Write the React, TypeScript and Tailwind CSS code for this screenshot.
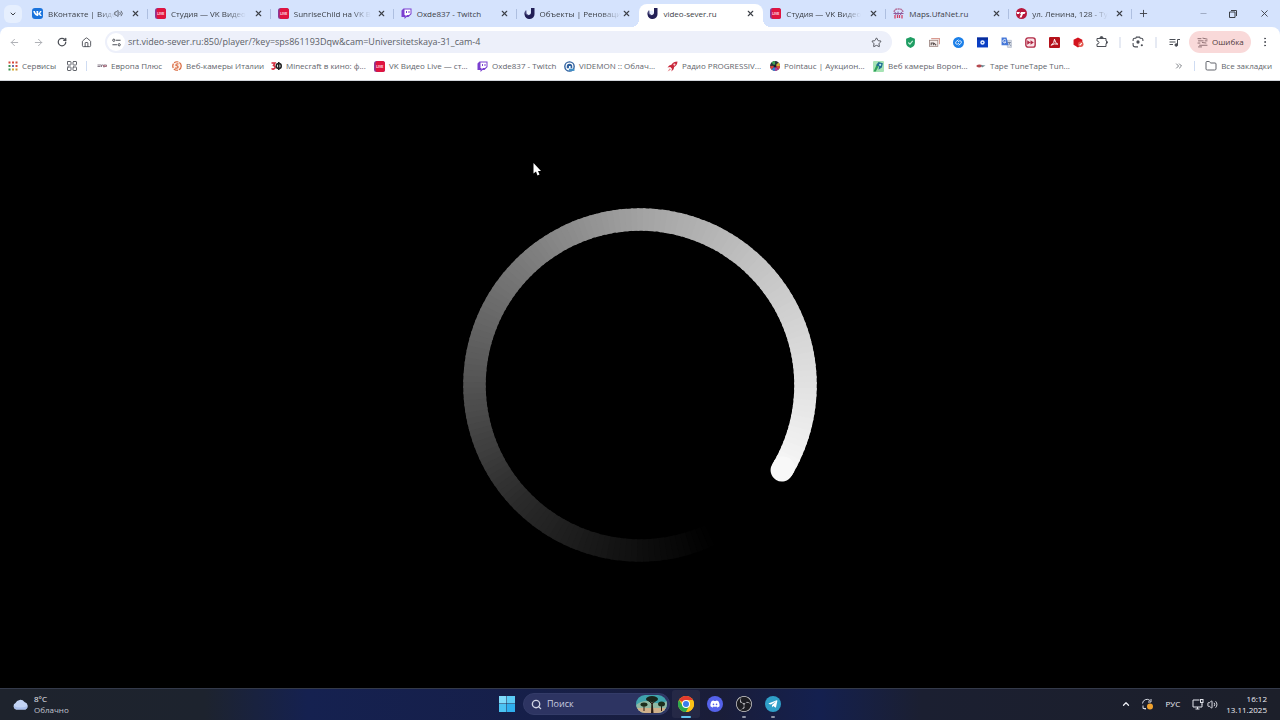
import React from 'react';
import {
  ArrowLeft,
  ArrowRight,
  ChevronDown,
  ChevronUp,
  ChevronsRight,
  Copy,
  EllipsisVertical,
  Folder,
  House,
  LayoutGrid,
  Minus,
  Plus,
  RotateCw,
  Search,
  Star,
  Volume2,
  X,
} from 'lucide-react';
import { FaDiscord, FaTelegramPlane, FaVk } from 'react-icons/fa';
import { SiObsstudio } from 'react-icons/si';

/* ---------- Favicons ---------- */

function VkIcon() {
  return (
    <span className="flex size-[11px] items-center justify-center rounded-[3px] bg-[#1a73dc] text-white">
      <FaVk size={9} />
    </span>
  );
}

function LiveIcon() {
  return (
    <svg viewBox="0 0 22 22" className="size-[11px]">
      <rect width="22" height="22" rx="5" fill="#8a3a96" />
      <rect x="3" width="19" height="22" rx="5" fill="#e0143f" />
      <text x="11.5" y="14" fontSize="7" fontWeight="700" fill="#ffdfe6" textAnchor="middle" fontFamily="Roboto, sans-serif">
        LIVE
      </text>
    </svg>
  );
}

function TwitchIcon() {
  return (
    <svg viewBox="0 0 22 22" className="size-[11px]">
      <path d="M5 1 H21 V12 L15 18 H11 L7 22 V18 H1 V5 Z" fill="#7a3fd0" />
      <path d="M7 3 H19 V11 L16 14 H12 L9 17 V14 H7 Z" fill="#fff" />
      <path d="M11 6 V10 M16 6 V10" stroke="#7a3fd0" strokeWidth="2" />
    </svg>
  );
}

function SeverIcon() {
  return (
    <svg viewBox="0 0 22 22" className="size-[11px]">
      <path d="M14 0 H21 V11 A10 10 0 0 1 1 13 Q0 8 4 5 Q3 12 9 14 Q14 14 14 8 Z" fill="#221f56" />
      <circle cx="9" cy="9" r="4" fill="#e4edfd" />
      <path d="M4 5 Q2 12 8 15" stroke="#6d6f9c" strokeWidth="2" fill="none" />
    </svg>
  );
}

function MapsIcon() {
  return (
    <svg viewBox="0 0 22 22" className="size-[11px]">
      <path d="M2 8 Q4 1 11 2 Q18 1 20 8" fill="none" stroke="#b5719b" strokeWidth="3" strokeDasharray="4 1" />
      <path d="M1 11 H21 M4 8 L6 14 M10 7 V14 M17 8 L15 14" stroke="#8d5a9c" strokeWidth="2" />
      <path d="M4 14 V21 M9 14 V20 M13 14 V20 M18 14 V21" stroke="#d33c62" strokeWidth="2.5" />
    </svg>
  );
}

function TvisIcon() {
  return (
    <svg viewBox="0 0 22 22" className="size-[11px]">
      <circle cx="11" cy="11" r="11" fill="#b8183c" />
      <path d="M1 8 H19 L17 12 H14 L11 19 H7 L10 12 H2 Z" fill="#fff" />
      <path d="M9 8 L6 14" stroke="#b8183c" strokeWidth="2" />
    </svg>
  );
}

function AppsIcon() {
  const colors = ['#d9483b', '#d9483b', '#c9513f', '#3c8f4e', '#6b6fa8', '#d9483b', '#3c8f4e', '#d6a92c', '#c9973a'];
  return (
    <svg viewBox="0 0 20 20" className="size-[10px]">
      {colors.map((c, i) => (
        <rect key={i} x={1 + (i % 3) * 7} y={1 + Math.floor(i / 3) * 7} width="4" height="4" fill={c} />
      ))}
    </svg>
  );
}

function EuropaIcon() {
  return (
    <svg viewBox="0 0 20 20" className="size-[10px]">
      <path d="M1 8 H8 M1 11 H7 M9 12 V8 H13 V12 M14 13 V8 H19 V11 H14" stroke="#8a7f8c" strokeWidth="2" fill="none" />
      <path d="M12 10 H19" stroke="#d8677a" strokeWidth="1.5" />
    </svg>
  );
}

function ItalyIcon() {
  return (
    <svg viewBox="0 0 20 20" className="size-[10px]">
      <circle cx="10" cy="10" r="8.5" fill="#fdf1ea" stroke="#d9673c" strokeWidth="2.4" strokeDasharray="9 2" />
      <path d="M13 6 Q7 5 8 9 Q13 10 12 13 Q10 15 6 14" fill="none" stroke="#d9673c" strokeWidth="2.2" />
    </svg>
  );
}

function KinoIcon() {
  return (
    <svg viewBox="0 0 22 20" className="h-[10px] w-[11px]">
      <path d="M1 4 H8 L5 9 Q9 10 8 14 Q5 18 1 15" fill="none" stroke="#d42a3c" strokeWidth="3" />
      <circle cx="15.5" cy="10" r="5" fill="none" stroke="#222" strokeWidth="3" />
      <path d="M15.5 2 V18" stroke="#222" strokeWidth="3" />
    </svg>
  );
}

function VidemonIcon() {
  return (
    <svg viewBox="0 0 20 20" className="size-[11px]">
      <circle cx="10" cy="10" r="8.5" fill="#fff" stroke="#2d5f9e" strokeWidth="2.5" />
      <path d="M5 10 A5 5 0 0 1 15 10 V13 H12 V9 H9 V13 H5 Z" fill="#2d5f9e" />
      <path d="M9 14 H19 V18 H9 Z" fill="#3f8fc8" />
    </svg>
  );
}

function RocketIcon() {
  return (
    <svg viewBox="0 0 20 20" className="size-[11px]">
      <path d="M19 1 Q12 1 8 7 L4 8 L1 12 L6 11 L9 14 L8 19 L12 15 L13 11 Q19 8 19 1 Z" fill="#c9283b" />
      <circle cx="13.5" cy="6.5" r="2" fill="#f6cdd0" />
      <path d="M5 13 L1 19 L7 16" fill="#e58a8f" />
    </svg>
  );
}

function PointaucIcon() {
  return (
    <svg viewBox="0 0 20 20" className="size-[10px]">
      <circle cx="10" cy="10" r="10" fill="#2c3a3b" />
      <path d="M10 10 L3 3 A10 10 0 0 1 10 0 Z" fill="#3fa657" />
      <path d="M10 10 L17 3 A10 10 0 0 1 20 10 Z" fill="#d3b138" />
      <path d="M10 10 L17 17 A10 10 0 0 1 10 20 Z" fill="#b33fa0" />
      <path d="M10 10 L0 10 A10 10 0 0 0 3 17 Z" fill="#d8443d" />
      <path d="M10 10 L20 10 A10 10 0 0 1 17 17 Z" fill="#d8443d" />
      <path d="M10 10 L3 17 A10 10 0 0 0 10 20 Z" fill="#3d7ed8" />
      <circle cx="10" cy="10" r="3" fill="#1d2326" />
    </svg>
  );
}

function VoronezhIcon() {
  return (
    <svg viewBox="0 0 20 20" className="size-[11px]">
      <rect width="20" height="20" rx="2" fill="#a6e3b4" />
      <path d="M5 8 L10 2 L18 4 L16 12 L10 16 L11 10 Z" fill="#1f6f92" />
      <path d="M6 8 L10 10 L5 19 H1 Z" fill="#2ea05a" />
      <circle cx="13" cy="7" r="2" fill="#bff0e8" />
    </svg>
  );
}

function TapeIcon() {
  return (
    <svg viewBox="0 0 20 20" className="size-[10px]">
      <path d="M1 9 Q5 6 12 8 L11 12 Q5 14 1 11 Z" fill="#b4484f" />
      <path d="M10 8 L19 9 L12 13 Z" fill="#6a8a94" />
    </svg>
  );
}

/* ---------- Extension icons ---------- */

function ShieldIcon() {
  return (
    <svg viewBox="0 0 20 20" className="size-[11px]">
      <path d="M10 0 L18 3 V11 Q18 17 10 20 Q2 17 2 11 V3 Z" fill="#1f9d63" />
      <path d="M6 10 L9 13 L14 7" fill="none" stroke="#c9f2dc" strokeWidth="2" />
    </svg>
  );
}

function CastIcon() {
  return (
    <svg viewBox="0 0 20 20" className="size-[11px]">
      <path d="M4 3 H19 V13" fill="none" stroke="#d89a90" strokeWidth="2" />
      <rect x="1" y="6" width="15" height="11" fill="#f6eeec" stroke="#9b8580" strokeWidth="1.5" />
      <path d="M4 15 V11 H8 V15 M9 11 L13 15" stroke="#5b5150" strokeWidth="2" fill="none" />
    </svg>
  );
}

function ShazamIcon() {
  return (
    <svg viewBox="0 0 20 20" className="size-[11px]">
      <circle cx="10" cy="10" r="10" fill="#1b7fe8" />
      <path d="M10 5 L6 8 Q3 11 6 13 Q8 14 11 11 M10 15 L14 12 Q17 9 14 7 Q12 6 9 9" fill="none" stroke="#dcecff" strokeWidth="1.8" />
    </svg>
  );
}

function CameraIcon() {
  return (
    <svg viewBox="0 0 20 20" className="size-[11px]">
      <rect y="1" width="20" height="18" fill="#0a3fc4" />
      <rect y="1" width="20" height="4" fill="#082c9a" />
      <circle cx="10" cy="10" r="4" fill="#e8f0ff" />
      <circle cx="10" cy="10" r="1.5" fill="#0a45c4" />
    </svg>
  );
}

function TranslateIcon() {
  return (
    <svg viewBox="0 0 20 20" className="size-[11px]">
      <path d="M9 6 H19 V19 H12 Z" fill="#d5dbe6" stroke="#a6afc0" />
      <path d="M1 1 H10 L14 15 H1 Z" fill="#4678d8" />
      <path d="M9 6 A3 3 0 1 0 9 9 H6" fill="none" stroke="#fff" strokeWidth="1.5" />
      <path d="M12 10 H18 M15 9 V10 Q15 14 18 16" fill="none" stroke="#6d7890" strokeWidth="1.5" />
    </svg>
  );
}

function SkipIcon() {
  return (
    <svg viewBox="0 0 20 20" className="size-[11px]">
      <rect x="1.5" y="1.5" width="17" height="17" rx="4" fill="#fbe3e8" stroke="#b02a45" strokeWidth="2.5" />
      <path d="M4 6 L10 10 L4 14 Z M10 6 L16 10 L10 14 Z" fill="#b02a45" />
    </svg>
  );
}

function AcrobatIcon() {
  return (
    <svg viewBox="0 0 20 20" className="size-[11px]">
      <rect width="20" height="20" rx="2" fill="#b5121b" />
      <path d="M4 15 Q10 11 10 4 Q11 11 16 13 Q9 11 4 15 Z" fill="none" stroke="#fff" strokeWidth="1.8" />
    </svg>
  );
}

function CubeIcon() {
  return (
    <svg viewBox="0 0 20 20" className="size-[11px]">
      <path d="M9 1 L17 5 V14 L9 19 L1 14 V5 Z" fill="#d3131d" />
      <circle cx="14" cy="13" r="5" fill="#e3574e" />
      <path d="M12 15 L16 11" stroke="#fff" strokeWidth="2" />
    </svg>
  );
}

function PuzzleIcon() {
  return (
    <svg viewBox="0 0 24 24" className="size-3" fill="none" stroke="#4b4e55" strokeWidth="2">
      <path d="M2 5 H20 V10 M20 15 V21 H2 V16 M2 5 V10" />
      <path d="M2 10 Q6 10 6 13 Q6 16 2 16" />
      <path d="M8 4 Q8 1 11 1 Q14 1 14 4 M20 10 Q23 10 23 13 Q23 15 20 15" fill="#4b4e55" />
    </svg>
  );
}

function LensIcon() {
  return (
    <svg viewBox="0 0 22 22" className="size-3" fill="none" stroke="#4b4e55" strokeWidth="2">
      <path d="M2 9 V7 Q2 4 5 4 H7 L8 2 H14 L15 4 H17 Q20 4 20 7 V9" />
      <path d="M2 13 V16 Q2 20 6 20 H11" />
      <circle cx="11" cy="11" r="3" fill="#4b4e55" stroke="none" />
      <circle cx="18" cy="17" r="2" fill="#4b4e55" stroke="none" />
    </svg>
  );
}

function MediaIcon() {
  return (
    <svg viewBox="0 0 22 22" className="size-[11px]" fill="none" stroke="#4b4e55" strokeWidth="2">
      <path d="M1 5 H13 M1 10 H13 M1 15 H8 M22 5 H17 V16" />
      <circle cx="14.5" cy="16" r="2.5" fill="#4b4e55" />
    </svg>
  );
}

function SiteInfoIcon() {
  return (
    <svg viewBox="0 0 20 20" className="size-[9px]" fill="none" stroke="#4b4e55" strokeWidth="2.2">
      <circle cx="4" cy="5" r="2.5" />
      <path d="M9 5 H19 M1 15 H11" />
      <circle cx="16" cy="15" r="2.5" />
    </svg>
  );
}

function ProfileIcon() {
  return (
    <svg viewBox="0 0 20 20" className="size-[11px]" fill="none" stroke="#7a5a5e" strokeWidth="1.5">
      <path d="M1 3 H8 M10 2 L19 4 M2 7 H12 M14 7 H19 M1 11 H6 M9 10 L17 11 M4 15 H19 M2 18 H9" />
    </svg>
  );
}

/* ---------- Data ---------- */

const tabs = [
  { title: 'ВКонтакте | Виде', icon: <VkIcon />, audio: true, fade: true },
  { title: 'Студия — VK Видео', icon: <LiveIcon />, fade: true },
  { title: 'SunriseChild на VK В', icon: <LiveIcon />, fade: true },
  { title: 'Oxde837 - Twitch', icon: <TwitchIcon /> },
  { title: 'Объекты | Реноваци', icon: <SeverIcon />, fade: true },
  { title: 'video-sever.ru', icon: <SeverIcon />, active: true },
  { title: 'Студия — VK Видео', icon: <LiveIcon />, fade: true },
  { title: 'Maps.UfaNet.ru', icon: <MapsIcon /> },
  { title: 'ул. Ленина, 128 - Ту', icon: <TvisIcon />, fade: true },
];

const bookmarks = [
  { title: 'Европа Плюс', icon: <EuropaIcon />, width: 'w-[75px]' },
  { title: 'Веб-камеры Италии', icon: <ItalyIcon />, width: 'w-[99px]' },
  { title: 'Minecraft в кино: ф...', icon: <KinoIcon />, width: 'w-[103px]' },
  { title: 'VK Видео Live — ст...', icon: <LiveIcon />, width: 'w-[103px]' },
  { title: 'Oxde837 - Twitch', icon: <TwitchIcon />, width: 'w-[87px]' },
  { title: 'VIDEMON :: Облач...', icon: <VidemonIcon />, width: 'w-[103px]' },
  { title: 'Радио PROGRESSIV...', icon: <RocketIcon />, width: 'w-[103px]' },
  { title: 'Pointauc | Аукцион...', icon: <PointaucIcon />, width: 'w-[103px]' },
  { title: 'Веб камеры Ворон...', icon: <VoronezhIcon />, width: 'w-[103px]' },
  { title: 'Tape TuneTape Tun...', icon: <TapeIcon />, width: 'w-[103px]' },
];

const extensions = [
  { name: 'AdGuard', icon: <ShieldIcon /> },
  { name: 'Cast', icon: <CastIcon /> },
  { name: 'Shazam', icon: <ShazamIcon /> },
  { name: 'Camera', icon: <CameraIcon /> },
  { name: 'Translate', icon: <TranslateIcon /> },
  { name: 'Skip', icon: <SkipIcon /> },
  { name: 'Acrobat', icon: <AcrobatIcon /> },
  { name: 'Cube', icon: <CubeIcon /> },
  { name: 'Extensions', icon: <PuzzleIcon /> },
];

/* ---------- Browser chrome ---------- */

function TabStrip() {
  return (
    <div className="flex h-[27px] items-center bg-[#d5e3fd] text-[#3c4047]">
      <div className="flex w-[25px] shrink-0 pl-1">
        <button aria-label="Поиск вкладок" className="flex size-[18px] items-center justify-center rounded-md bg-[#e6effe]">
          <ChevronDown size={8} strokeWidth={3} />
        </button>
      </div>
      {tabs.map((tab, i) => (
        <div
          key={i}
          className={
            tab.active
              ? 'relative flex h-[23px] min-w-0 flex-1 items-center self-end rounded-t-lg bg-white pr-2 pb-1 pl-2'
              : 'relative flex h-[27px] min-w-0 flex-1 items-center pr-2 pl-[7px]'
          }
        >
          {tab.active && (
            <>
              <span className="absolute bottom-0 -left-2 size-2 bg-[radial-gradient(circle_at_0_0,transparent_8px,white_8px)]" />
              <span className="absolute -right-2 bottom-0 size-2 bg-[radial-gradient(circle_at_100%_0,transparent_8px,white_8px)]" />
            </>
          )}
          <button className="flex min-w-0 flex-1 items-center gap-[5px] text-left">
            <span className="shrink-0">{tab.icon}</span>
            <span className={tab.fade ? 'whitespace-nowrap mask-r-from-75% mask-r-to-100%' : 'whitespace-nowrap'}>
              {tab.title}
            </span>
          </button>
          {tab.audio && <Volume2 size={9} strokeWidth={2} className="mr-2 shrink-0" />}
          <button aria-label="Закрыть вкладку" className="shrink-0">
            <X size={9} strokeWidth={3} />
          </button>
          {!tab.active && !tabs[i + 1]?.active && <span className="absolute right-0 h-[10px] w-px bg-[#aebfe0]" />}
        </div>
      ))}
      <div className="flex w-[148px] shrink-0 items-center pl-[6px]">
        <button aria-label="Новая вкладка">
          <Plus size={11} />
        </button>
        <div className="ml-auto flex items-center">
          <button aria-label="Свернуть" className="flex w-[30px] justify-center text-[#8d99b0]">
            <Minus size={9} />
          </button>
          <button aria-label="Развернуть" className="flex w-[30px] justify-center">
            <svg viewBox="0 0 16 16" className="size-2" fill="none" stroke="currentColor" strokeWidth="2">
              <path d="M1 4 H12 V15 H1 Z M4 1 H15 V12" />
            </svg>
          </button>
          <button aria-label="Закрыть" className="flex w-8 justify-center">
            <X size={11} />
          </button>
        </div>
      </div>
    </div>
  );
}

function Divider() {
  return <span className="mx-[5px] h-[11px] w-[2px] shrink-0 bg-[#e6eaf3]" />;
}

function Toolbar() {
  return (
    <div className="flex h-[30px] items-center text-[#4b4e55]">
      <div className="flex pl-[2px]">
        <button aria-label="Назад" className="flex w-6 justify-center text-[#a9abb0]">
          <ArrowLeft size={11} />
        </button>
        <button aria-label="Вперёд" className="flex w-6 justify-center text-[#a9abb0]">
          <ArrowRight size={11} />
        </button>
        <button aria-label="Обновить" className="flex w-6 justify-center">
          <RotateCw size={10} strokeWidth={3} />
        </button>
        <button aria-label="Главная" className="flex w-6 justify-center">
          <House size={11} />
        </button>
      </div>
      <div className="ml-[7px] flex h-[22px] min-w-0 flex-1 items-center rounded-full bg-[#edf0fa] pr-[10px] pl-[2px]">
        <button aria-label="Сведения о сайте" className="flex size-[18px] shrink-0 items-center justify-center rounded-full bg-white">
          <SiteInfoIcon />
        </button>
        <input
          aria-label="Адресная строка"
          className="ml-[3px] min-w-0 flex-1 bg-transparent text-[9px] text-[#5b5e66] outline-none"
          defaultValue="srt.video-sever.ru:850/player/?key=sps861193Dqw&cam=Universitetskaya-31_cam-4"
        />
        <button aria-label="Добавить в закладки">
          <Star size={11} />
        </button>
      </div>
      <div className="ml-[6px] flex shrink-0 items-center">
        {extensions.map((ext) => (
          <button key={ext.name} aria-label={ext.name} className="flex w-6 justify-center">
            {ext.icon}
          </button>
        ))}
        <Divider />
        <button aria-label="Google Объектив" className="flex w-6 justify-center">
          <LensIcon />
        </button>
        <Divider />
        <button aria-label="Управление медиа" className="flex w-6 justify-center">
          <MediaIcon />
        </button>
        <button className="ml-[3px] flex h-[22px] w-[62px] items-center gap-1 rounded-full bg-[#f9d9d9] pl-2 text-[#4f3a3c]">
          <ProfileIcon />
          Ошибка
        </button>
        <button aria-label="Меню" className="mr-[3px] ml-[2px] flex w-6 justify-center">
          <EllipsisVertical size={12} />
        </button>
      </div>
    </div>
  );
}

function BookmarksBar() {
  return (
    <nav className="flex h-6 items-center border-b border-[#d3d6dc] pb-[5px] text-[#62656c]">
      <a href="#" className="flex w-[58px] shrink-0 items-center gap-1 pl-2">
        <AppsIcon />
        Сервисы
      </a>
      <a href="#" aria-label="Группы вкладок" className="flex w-[27px] shrink-0 justify-center">
        <LayoutGrid size={12} />
      </a>
      <span className="mr-[10px] ml-px h-[10px] w-px bg-[#cfdcf2]" />
      <div className="flex min-w-0 flex-1 overflow-hidden">
        {bookmarks.map((b) => (
          <a key={b.title} href="#" className={`flex shrink-0 items-center gap-1 whitespace-nowrap ${b.width}`}>
            {b.icon}
            {b.title}
          </a>
        ))}
      </div>
      <button aria-label="Ещё закладки">
        <ChevronsRight size={10} />
      </button>
      <span className="mx-[10px] h-[10px] w-px bg-[#cfdcf2]" />
      <a href="#" className="flex items-center gap-1 pr-2 whitespace-nowrap">
        <Folder size={12} />
        Все закладки
      </a>
    </nav>
  );
}

/* ---------- Player ---------- */

// angle is measured clockwise from the top of the ring
const STEPS = 164;
const START = 153;
const END = 481;
const R = 165.5;

function point(angle: number) {
  const a = (angle * Math.PI) / 180;
  return `${(177 + R * Math.sin(a)).toFixed(2)} ${(177 - R * Math.cos(a)).toFixed(2)}`;
}

const stops = [
  [153, 0],
  [180, 15],
  [225, 42],
  [270, 84],
  [315, 122],
  [360, 163],
  [405, 196],
  [450, 226],
  [481, 248],
];

function shade(angle: number) {
  const i = Math.max(1, stops.findIndex((s) => s[0] >= angle));
  const [a0, v0] = stops[i - 1];
  const [a1, v1] = stops[i];
  const v = Math.round(v0 + ((v1 - v0) * (angle - a0)) / (a1 - a0));
  return `rgb(${v},${v},${v})`;
}

function Spinner() {
  const step = (END - START) / STEPS;
  return (
    <svg viewBox="0 0 354 354" className="size-[354px]" fill="none" strokeWidth="22.5" role="img" aria-label="Загрузка">
      {Array.from({ length: STEPS }, (_, i) => {
        const from = START + i * step;
        const to = Math.min(END, from + step * 1.4);
        return <path key={i} d={`M${point(from)} A${R} ${R} 0 0 1 ${point(to)}`} stroke={shade(from)} />;
      })}
      <path d={`M${point(END - 1)} L${point(END)}`} stroke={shade(END)} strokeLinecap="round" />
    </svg>
  );
}

function Player() {
  return (
    <main className="relative flex flex-1 items-center justify-center bg-black">
      <Spinner />
      <svg viewBox="0 0 16 26" className="absolute top-[82px] left-[533px] h-[13px] w-[8px]">
        <path d="M1 0 V21 L6 17 L9 25 L13 23 L10 16 H16 Z" fill="#fff" />
      </svg>
    </main>
  );
}

/* ---------- Taskbar ---------- */

function CloudIcon() {
  return (
    <svg viewBox="0 0 34 22" className="h-[11px] w-[17px]">
      <path d="M8 21 A7 7 0 0 1 7 8 A10 9 0 0 1 25 6 A8 8 0 0 1 27 21 Z" fill="#c3d4f5" />
      <path d="M8 21 A7 7 0 0 1 4 14 Q16 20 31 14 A8 8 0 0 1 27 21 Z" fill="#a9bfec" />
    </svg>
  );
}

function WindowsIcon() {
  return (
    <svg viewBox="0 0 32 32" className="size-4">
      <path d="M0 0 H15 V15 H0 Z" fill="#7fdcfb" />
      <path d="M16 0 H32 V15 H16 Z" fill="#5bccf6" />
      <path d="M0 16 H15 V32 H0 Z" fill="#4bc3f3" />
      <path d="M16 16 H32 V32 H16 Z" fill="#2fafee" />
    </svg>
  );
}

function TreesPicture() {
  return (
    <svg viewBox="0 0 62 36" className="h-[18px] w-[31px] rounded-full">
      <rect width="62" height="36" fill="#3fa3ad" />
      <path d="M0 20 Q15 8 31 14 Q50 20 62 12 V36 H0 Z" fill="#8fb9a4" />
      <path d="M0 26 H62 V36 H0 Z" fill="#d0b08a" />
      <path d="M30 36 L31 10 H33 L35 36 Z M15 32 V20 H17 V32 Z M50 32 V20 H52 V32 Z" fill="#2a1c14" />
      <path d="M32 18 L24 10 M32 18 L41 10" stroke="#2a1c14" strokeWidth="2" />
      <ellipse cx="32" cy="8" rx="12" ry="6" fill="#18261b" />
      <ellipse cx="16" cy="19" rx="7" ry="4" fill="#1c2e1c" />
      <ellipse cx="51" cy="18" rx="7" ry="5" fill="#1c2e1c" />
    </svg>
  );
}

function ChromeIcon() {
  return (
    <svg viewBox="0 0 32 32" className="size-4">
      <circle cx="16" cy="16" r="16" fill="#fbc116" />
      <path d="M16 16 L2.1 8 A16 16 0 0 1 29.9 8 Z" fill="#e33b2e" />
      <path d="M2.1 8 A16 16 0 0 0 16 32 L22.5 20 L9.5 20 Z" fill="#2da94f" />
      <path d="M16 8 H29.9 A16 16 0 0 1 16 32 L23 20 Z" fill="#fbc116" />
      <circle cx="16" cy="16" r="8" fill="#fff" />
      <circle cx="16" cy="16" r="6" fill="#3b7ded" />
    </svg>
  );
}

function SyncIcon() {
  return (
    <svg viewBox="0 0 24 24" className="size-3" fill="none" stroke="#d7dae3" strokeWidth="2">
      <path d="M3 11 A9 9 0 0 1 18 5 M20 2 V8 H14 M4 15 V21 H10" />
      <path d="M4 20 A9 9 0 0 0 10 22" />
      <circle cx="18" cy="17" r="6" fill="#f0a22e" stroke="none" />
    </svg>
  );
}

function NetworkIcon() {
  return (
    <svg viewBox="0 0 24 24" className="size-3" fill="none" stroke="#e3e5ec" strokeWidth="2">
      <path d="M15 4 H2 V18 H20 V12 M7 22 H15 M11 18 V22" />
      <rect x="17" y="3" width="5" height="6" />
      <path d="M20 9 V13" />
    </svg>
  );
}

const apps = [
  { name: 'Google Chrome', icon: <ChromeIcon />, button: 'bg-white/5', mark: 'w-[10px] bg-[#62c5f0]' },
  {
    name: 'Discord',
    icon: (
      <span className="flex size-4 items-center justify-center rounded-full bg-[#5562ea] text-white">
        <FaDiscord size={10} />
      </span>
    ),
    button: '',
    mark: '',
  },
  {
    name: 'OBS Studio',
    icon: (
      <span className="flex size-4 items-center justify-center rounded-full bg-[#1d1d22] text-[#d2d2d6]">
        <SiObsstudio size={16} />
      </span>
    ),
    button: '',
    mark: 'w-1 bg-[#8e93a6]',
  },
  {
    name: 'Telegram',
    icon: (
      <span className="flex size-4 items-center justify-center rounded-full bg-[#2f9fc8] text-white">
        <FaTelegramPlane size={10} />
      </span>
    ),
    button: '',
    mark: 'w-1 bg-[#8e93a6]',
  },
];

function Taskbar() {
  return (
    <footer className="grid h-8 grid-cols-[1fr_auto_1fr] items-center border-t border-[#343a4a] bg-[linear-gradient(to_right,#1e232d_0%,#1d232e_16%,#152150_24%,#161f49_42%,#1a1d38_56%,#14204f_64%,#1b1f31_72%,#1c1f2a_100%)] pb-px text-[#eceef4]">
      <div className="flex items-center gap-[5px] pl-3">
        <CloudIcon />
        <div className="leading-[11px]">
          <p>8°C</p>
          <p className="text-[#c0c4d0]">Облачно</p>
        </div>
      </div>

      <div className="flex items-center gap-[2px]">
        <button aria-label="Пуск" className="flex w-7 justify-center">
          <WindowsIcon />
        </button>
        <label className="flex h-[22px] w-[147px] items-center gap-[5px] rounded-full border border-[#333b68] bg-[#2d3462] pr-[2px] pl-[7px]">
          <Search size={11} strokeWidth={3} className="shrink-0 text-[#d0d4e4]" />
          <input
            aria-label="Поиск"
            placeholder="Поиск"
            className="min-w-0 flex-1 bg-transparent text-[9px] outline-none placeholder:text-[#c9cde0]"
          />
          <TreesPicture />
        </label>
        <div className="flex gap-px">
          {apps.map((app) => (
            <button
              key={app.name}
              aria-label={app.name}
              className={`relative flex h-7 w-7 items-center justify-center rounded-[3px] ${app.button}`}
            >
              {app.icon}
              {app.mark && <span className={`absolute bottom-0 h-[2px] rounded-full ${app.mark}`} />}
            </button>
          ))}
        </div>
      </div>

      <div className="flex items-center justify-end pr-[13px]">
        <button aria-label="Скрытые значки" className="mr-[10px]">
          <ChevronUp size={10} strokeWidth={3} />
        </button>
        <button aria-label="Обновление" className="mr-3">
          <SyncIcon />
        </button>
        <button className="mr-3">РУС</button>
        <button aria-label="Сеть и звук" className="mr-2 flex items-center gap-[3px]">
          <NetworkIcon />
          <Volume2 size={11} />
        </button>
        <div className="text-right leading-[11px]">
          <p>16:12</p>
          <p>13.11.2025</p>
        </div>
      </div>
    </footer>
  );
}

export default function App() {
  return (
    <div className="flex min-h-screen flex-col bg-black font-['Open_Sans','Noto_Sans',sans-serif] text-[8px] leading-3">
      <header className="bg-[#d5e3fd]">
        <TabStrip />
        <div className="rounded-t-lg bg-white">
          <Toolbar />
          <BookmarksBar />
        </div>
      </header>
      <Player />
      <Taskbar />
    </div>
  );
}
